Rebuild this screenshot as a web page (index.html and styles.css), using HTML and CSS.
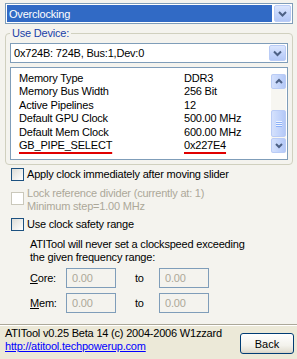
FILE: index.html
```html
<!DOCTYPE html>
<html lang="en">
<head>
    <meta charset="UTF-8">
    <title>ATITool - Overclocking</title>
    <link rel="stylesheet" href="styles.css">
</head>
<body>
    <div class="window">
        <div class="panel">
            <div class="combo combo-top">
                <div class="combo-value selected">Overclocking</div>
                <span class="combo-btn">
                    <svg width="15" height="15" viewBox="0 0 15 15"><path d="M4 6 L7.5 9.5 L11 6" fill="none" stroke="#4D6185" stroke-width="2"/></svg>
                </span>
            </div>

            <fieldset class="group">
                <legend>Use Device:</legend>
                <div class="combo combo-device">
                    <div class="combo-value">0x724B: 724B, Bus:1,Dev:0</div>
                    <span class="combo-btn">
                        <svg width="15" height="14" viewBox="0 0 15 14"><path d="M4 5.5 L7.5 9 L11 5.5" fill="none" stroke="#4D6185" stroke-width="2"/></svg>
                    </span>
                </div>

                <div class="listbox">
                    <div class="list-rows">
                        <div class="list-row"><span class="list-key">Memory Type</span><span>DDR3</span></div>
                        <div class="list-row"><span class="list-key">Memory Bus Width</span><span>256 Bit</span></div>
                        <div class="list-row"><span class="list-key">Active Pipelines</span><span>12</span></div>
                        <div class="list-row"><span class="list-key">Default GPU Clock</span><span>500.00 MHz</span></div>
                        <div class="list-row"><span class="list-key">Default Mem Clock</span><span>600.00 MHz</span></div>
                        <div class="list-row"><span class="list-key"><span class="marked">GB_PIPE_SELECT</span></span><span class="marked">0x227E4</span></div>
                    </div>
                    <div class="scrollbar">
                        <span class="sb-btn">
                            <svg width="12" height="13" viewBox="0 0 12 13"><path d="M3 8 L6 5 L9 8" fill="none" stroke="#4D6185" stroke-width="2"/></svg>
                        </span>
                        <span class="sb-track">
                            <span class="sb-thumb">
                                <svg width="8" height="8" viewBox="0 0 8 8">
                                    <path d="M1 1.5 H7 M1 3.5 H7 M1 5.5 H7" stroke="#EEF4FE" stroke-width="1"/>
                                    <path d="M1 2.5 H7 M1 4.5 H7 M1 6.5 H7" stroke="#8CB0F8" stroke-width="1"/>
                                </svg>
                            </span>
                        </span>
                        <span class="sb-btn">
                            <svg width="12" height="13" viewBox="0 0 12 13"><path d="M3 5 L6 8 L9 5" fill="none" stroke="#4D6185" stroke-width="2"/></svg>
                        </span>
                    </div>
                </div>
            </fieldset>

            <label class="check check-first"><span class="box"></span>Apply clock immediately after moving slider</label>
            <label class="check check-multi disabled"><span class="box"></span><span>Lock reference divider (currently at: 1)<br>Minimum step=1.00 MHz</span></label>
            <label class="check check-last"><span class="box"></span>Use clock safety range</label>

            <p class="note">ATITool will never set a clockspeed exceeding<br>the given frequency range:</p>

            <div class="range range-core">
                <span class="range-label"><u>C</u>ore:</span>
                <span class="field">0.00</span>
                <span class="to">to</span>
                <span class="field">0.00</span>
            </div>
            <div class="range range-mem">
                <span class="range-label"><u>M</u>em:</span>
                <span class="field">0.00</span>
                <span class="to">to</span>
                <span class="field">0.00</span>
            </div>
        </div>

        <div class="footer">
            <div class="about">
                ATITool v0.25 Beta 14 (c) 2004-2006 W1zzard<br>
                <a href="#">http://atitool.techpowerup.com</a>
            </div>
            <button type="button" class="btn">Back</button>
        </div>
    </div>
</body>
</html>
```

FILE: styles.css
```css
* {
    box-sizing: border-box;
}

body {
    font-family: "Liberation Sans", Arial, sans-serif;
    font-size: 11px;
    letter-spacing: -0.2px;
    color: #000;
    background-color: #ECE9D8;
    margin: 0;
    padding: 0;
}

.window {
    width: 297px;
    height: 359px;
    display: flex;
    flex-direction: column;
    overflow: hidden;
}

.panel {
    flex: 1;
    background-color: #F4F3EE;
    padding: 3px 4px 0 5px;
}

/* Combo boxes */
.combo {
    display: flex;
    border: 1px solid #7F9DB9;
    background-color: #fff;
    padding: 1px;
}

.combo-top {
    height: 21px;
}

.combo-device {
    height: 20px;
}

.combo-value {
    flex: 1;
    display: flex;
    align-items: center;
    padding-left: 2px;
    margin-right: 2px;
    white-space: nowrap;
}

.combo-value.selected {
    background-color: #316AC5;
    color: #fff;
}

.combo-btn {
    width: 17px;
    flex: none;
    display: flex;
    align-items: center;
    justify-content: center;
    border: 1px solid #BACCF6;
    border-radius: 2px;
    background: linear-gradient(#DCE6FD, #C1D3FB 60%, #B4C8F6);
}

/* Group box */
.group {
    margin: 3px 0 0;
    padding: 3px 4px 4px;
    border: 1px solid #D0D0BF;
    border-radius: 4px;
    min-width: 0;
}

.group legend {
    padding: 0 2px;
    line-height: 13px;
    color: #1A3FA8;
}

/* List view */
.listbox {
    display: flex;
    height: 93px;
    margin-top: 4px;
    border: 1px solid #7F9DB9;
    background-color: #fff;
    padding: 0 1px 0 8px;
}

.list-rows {
    flex: 1;
    padding-top: 3.5px;
}

.list-row {
    display: flex;
    line-height: 13.6px;
    white-space: nowrap;
}

.list-key {
    width: 165px;
    flex: none;
}

.marked {
    text-decoration: underline;
    text-decoration-color: #E00000;
    text-decoration-thickness: 2px;
    text-underline-offset: 2.5px;
}

.scrollbar {
    width: 15px;
    margin: 6px 0;
    display: flex;
    flex-direction: column;
    background-color: #F7F6F1;
}

.sb-btn {
    height: 15px;
    flex: none;
    display: flex;
    align-items: center;
    justify-content: center;
    border: 1px solid #BACCF6;
    border-radius: 2px;
    background: linear-gradient(90deg, #D5E1FC, #C1D3FB 60%, #B4C8F6);
}

.sb-track {
    flex: 1;
    padding-top: 21px;
}

.sb-thumb {
    height: 27px;
    display: flex;
    align-items: center;
    justify-content: center;
    border: 1px solid #BACCF6;
    border-radius: 2px;
    background: linear-gradient(90deg, #D5E1FC, #C1D3FB 60%, #B4C8F6);
}

/* Check boxes */
.check {
    display: flex;
    align-items: center;
    gap: 3px;
    line-height: 13px;
    margin-left: 6px;
    white-space: nowrap;
}

.check-first {
    margin-top: 3px;
}

.check-multi {
    align-items: flex-start;
    margin-top: 6px;
}

.check-multi .box {
    margin-top: 5px;
}

.check-last {
    margin-top: 5px;
}

.box {
    width: 13px;
    height: 13px;
    flex: none;
    border: 1px solid #1C5180;
    background: linear-gradient(135deg, #DCDCD7, #fff);
}

.check.disabled {
    color: #ACA899;
}

.check.disabled .box {
    border-color: #CAC8BB;
    background: #fff;
}

.note {
    margin: 7px 0 0 25px;
    line-height: 13px;
    white-space: nowrap;
}

/* Safety range */
.range {
    display: flex;
    align-items: center;
    height: 20px;
    margin-left: 25px;
}

.range-core {
    margin-top: 4px;
}

.range-mem {
    margin-top: 5px;
}

.range-label {
    width: 36px;
}

.field {
    width: 50px;
    height: 20px;
    display: flex;
    align-items: center;
    padding-left: 5px;
    border: 1px solid #7F9DB9;
    color: #ACA899;
}

.to {
    width: 43px;
    padding-left: 19px;
}

/* Footer */
.footer {
    height: 35px;
    display: flex;
    justify-content: space-between;
    align-items: flex-start;
    padding: 2px 3px 0 5px;
    border-top: 1px solid #ACA899;
    box-shadow: inset 0 1px #fff;
}

.about {
    line-height: 13px;
    white-space: nowrap;
}

.about a {
    color: #0000FF;
}

.btn {
    width: 54px;
    height: 21px;
    margin-top: 6px;
    padding: 0;
    font: inherit;
    color: #000;
    border: 1px solid #003C74;
    border-radius: 3px;
    background: linear-gradient(#FFFFFF, #F3F2EC 60%, #E3E0D4 90%, #D6D0C5);
}
```
